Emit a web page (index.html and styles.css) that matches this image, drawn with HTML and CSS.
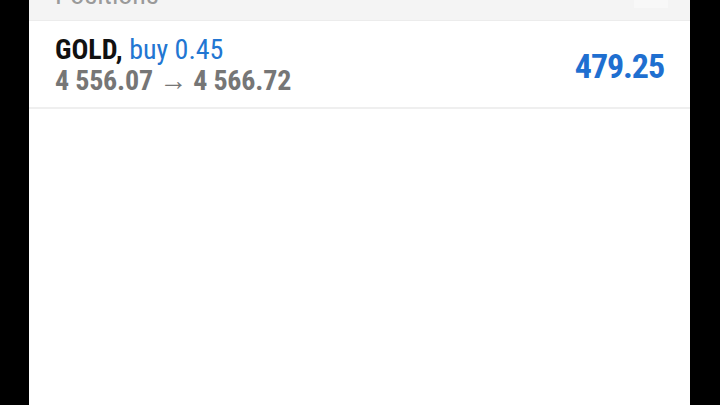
FILE: index.html
```html
<!DOCTYPE html>
<html>
<head>
<meta charset="utf-8">
<link rel="stylesheet" href="styles.css">
</head>
<body>
<div class="panel">
  <div class="header">
    <span class="header-title">Positions</span>
    <span class="header-icon"></span>
  </div>
  <div class="row">
    <div class="info">
      <div class="line1"><span class="sym">GOLD,</span> <span class="side">buy 0.45</span></div>
      <div class="line2">4 556.07 → 4 566.72</div>
    </div>
    <div class="profit">479.25</div>
  </div>
</div>
</body>
</html>
```
FILE: styles.css
```css
html, body {
  margin: 0;
  padding: 0;
  background: #000;
  height: 100%;
  overflow: hidden;
}
.panel {
  margin-left: 29px;
  width: 661px;
  height: 405px;
  background: #fff;
  font-family: "Roboto", "Liberation Sans", sans-serif;
  font-stretch: 80%;
}
.header {
  height: 20px;
  background: #f4f4f4;
  border-bottom: 1px solid #ececec;
  overflow: hidden;
  display: flex;
  justify-content: space-between;
  padding: 0 22px 0 26px;
}
.header-title {
  display: block;
  margin-top: -19px;
  font-size: 28px;
  line-height: 28px;
  color: #9a9a9a;
}
.header-icon {
  display: block;
  width: 34px;
  height: 8px;
  background: #f8f8f8;
}
.row {
  display: flex;
  align-items: center;
  justify-content: space-between;
  padding: 13px 26px 11px 26px;
  border-bottom: 2px solid #efefef;
}
.info {
  font-size: 28px;
  line-height: 31px;
}
.sym {
  font-weight: 700;
  color: #111;
}
.side {
  color: #2276d2;
}
.line2 {
  color: #767676;
  font-weight: 700;
  letter-spacing: -0.2px;
}
.profit {
  font-size: 34px;
  font-weight: 700;
  letter-spacing: -1.1px;
  color: #1f6fd0;
  margin-top: 2px;
}
```
